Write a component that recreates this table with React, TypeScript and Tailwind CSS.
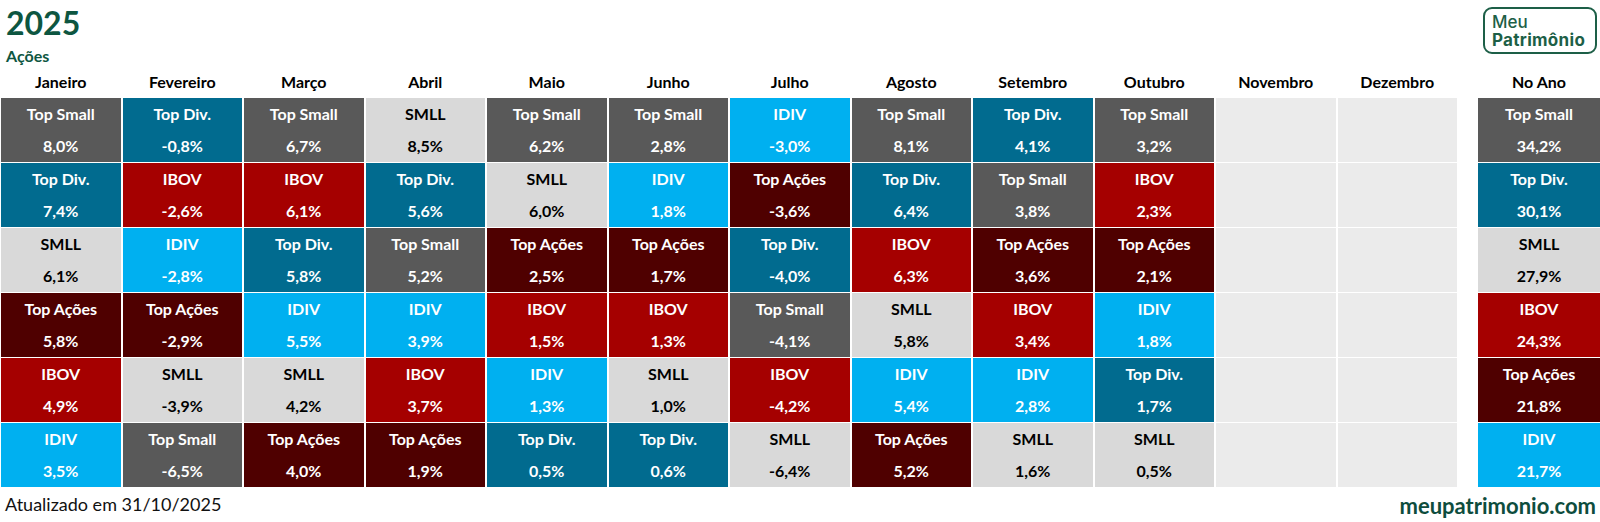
const MONTHS = [
  "Janeiro",
  "Fevereiro",
  "Março",
  "Abril",
  "Maio",
  "Junho",
  "Julho",
  "Agosto",
  "Setembro",
  "Outubro",
  "Novembro",
  "Dezembro"
];

type Entry = [string, string];

const STYLES: Record<string, string> = {
  "Top Small": "bg-[#595959] text-white",
  "Top Div.": "bg-[#016b8f] text-white",
  SMLL: "bg-[#d9d9d9] text-black",
  "Top Ações": "bg-[#4f0000] text-white",
  IBOV: "bg-[#a50000] text-white",
  IDIV: "bg-[#00b0f0] text-white"
};

const COLUMNS: Entry[][] = [
  [["Top Small", "8,0%"], ["Top Div.", "7,4%"], ["SMLL", "6,1%"], ["Top Ações", "5,8%"], ["IBOV", "4,9%"], ["IDIV", "3,5%"]],
  [["Top Div.", "-0,8%"], ["IBOV", "-2,6%"], ["IDIV", "-2,8%"], ["Top Ações", "-2,9%"], ["SMLL", "-3,9%"], ["Top Small", "-6,5%"]],
  [["Top Small", "6,7%"], ["IBOV", "6,1%"], ["Top Div.", "5,8%"], ["IDIV", "5,5%"], ["SMLL", "4,2%"], ["Top Ações", "4,0%"]],
  [["SMLL", "8,5%"], ["Top Div.", "5,6%"], ["Top Small", "5,2%"], ["IDIV", "3,9%"], ["IBOV", "3,7%"], ["Top Ações", "1,9%"]],
  [["Top Small", "6,2%"], ["SMLL", "6,0%"], ["Top Ações", "2,5%"], ["IBOV", "1,5%"], ["IDIV", "1,3%"], ["Top Div.", "0,5%"]],
  [["Top Small", "2,8%"], ["IDIV", "1,8%"], ["Top Ações", "1,7%"], ["IBOV", "1,3%"], ["SMLL", "1,0%"], ["Top Div.", "0,6%"]],
  [["IDIV", "-3,0%"], ["Top Ações", "-3,6%"], ["Top Div.", "-4,0%"], ["Top Small", "-4,1%"], ["IBOV", "-4,2%"], ["SMLL", "-6,4%"]],
  [["Top Small", "8,1%"], ["Top Div.", "6,4%"], ["IBOV", "6,3%"], ["SMLL", "5,8%"], ["IDIV", "5,4%"], ["Top Ações", "5,2%"]],
  [["Top Div.", "4,1%"], ["Top Small", "3,8%"], ["Top Ações", "3,6%"], ["IBOV", "3,4%"], ["IDIV", "2,8%"], ["SMLL", "1,6%"]],
  [["Top Small", "3,2%"], ["IBOV", "2,3%"], ["Top Ações", "2,1%"], ["IDIV", "1,8%"], ["Top Div.", "1,7%"], ["SMLL", "0,5%"]],
  [],
  []
];

const YEAR: Entry[] = [
  ["Top Small", "34,2%"],
  ["Top Div.", "30,1%"],
  ["SMLL", "27,9%"],
  ["IBOV", "24,3%"],
  ["Top Ações", "21,8%"],
  ["IDIV", "21,7%"]
];

function Cell({ entry }: { entry?: Entry }) {
  if (!entry) return <div className="h-[64px] bg-[#ebebeb]" />;
  const [name, value] = entry;
  return (
    <div className={`flex h-[64px] flex-col items-center text-[16px] font-bold ${STYLES[name]}`}>
      <div className="leading-[32px]">{name}</div>
      <div className="leading-[32px]">{value}</div>
    </div>
  );
}

function Logo() {
  return (
    <div className="mr-[3px] mt-[7px] h-[47px] w-[114px] rounded-[9px] border-2 border-[#1d5f47] pl-[7px] pt-[4px] font-['Inter',sans-serif] text-[17px] text-[#1d5f47]">
      <div className="font-medium leading-[18px]">Meu</div>
      <div className="font-bold leading-[18px] tracking-[0.3px]">Patrimônio</div>
    </div>
  );
}

export default function App() {
  return (
    <div className="h-[522px] w-[1600px] overflow-hidden bg-white font-['Lato',sans-serif] text-black">
      <div className="flex h-[70px] justify-between">
        <div className="pl-[6px] text-[#0d5641]">
          <div className="mt-[7px] text-[32px] font-bold leading-[32px]">2025</div>
          <div className="mt-[8px] text-[16px] font-bold leading-[18px]">Ações</div>
        </div>
        <Logo />
      </div>

      <div className="flex gap-[21px]">
        <div className="ml-[1px] w-[1456px]">
          <div className="mb-[4px] grid h-[24px] grid-cols-12 gap-x-[2px]">
            {MONTHS.map((m) => (
              <div key={m} className="text-center text-[16px] font-bold leading-[24px]">
                {m}
              </div>
            ))}
          </div>
          <div className="grid grid-flow-col grid-cols-12 grid-rows-6 gap-x-[2px] gap-y-[1px]">
            {COLUMNS.map((col, ci) =>
              [0, 1, 2, 3, 4, 5].map((ri) => <Cell key={`${ci}-${ri}`} entry={col[ri]} />)
            )}
          </div>
        </div>
        <div className="w-[122px]">
          <div className="mb-[4px] h-[24px] text-center text-[16px] font-bold leading-[24px]">
            No Ano
          </div>
          <div className="flex flex-col gap-y-[1px]">
            {YEAR.map((e) => (
              <Cell key={e[0]} entry={e} />
            ))}
          </div>
        </div>
      </div>

      <div className="flex justify-between">
        <div className="ml-[5px] mt-[7px] text-[18px] leading-[21px] text-[#111]">
          Atualizado em 31/10/2025
        </div>
        <div className="mr-[4px] mt-[7px] text-[22px] font-bold leading-[24px] text-[#0e4d3d]">
          meupatrimonio.com
        </div>
      </div>
    </div>
  );
}
